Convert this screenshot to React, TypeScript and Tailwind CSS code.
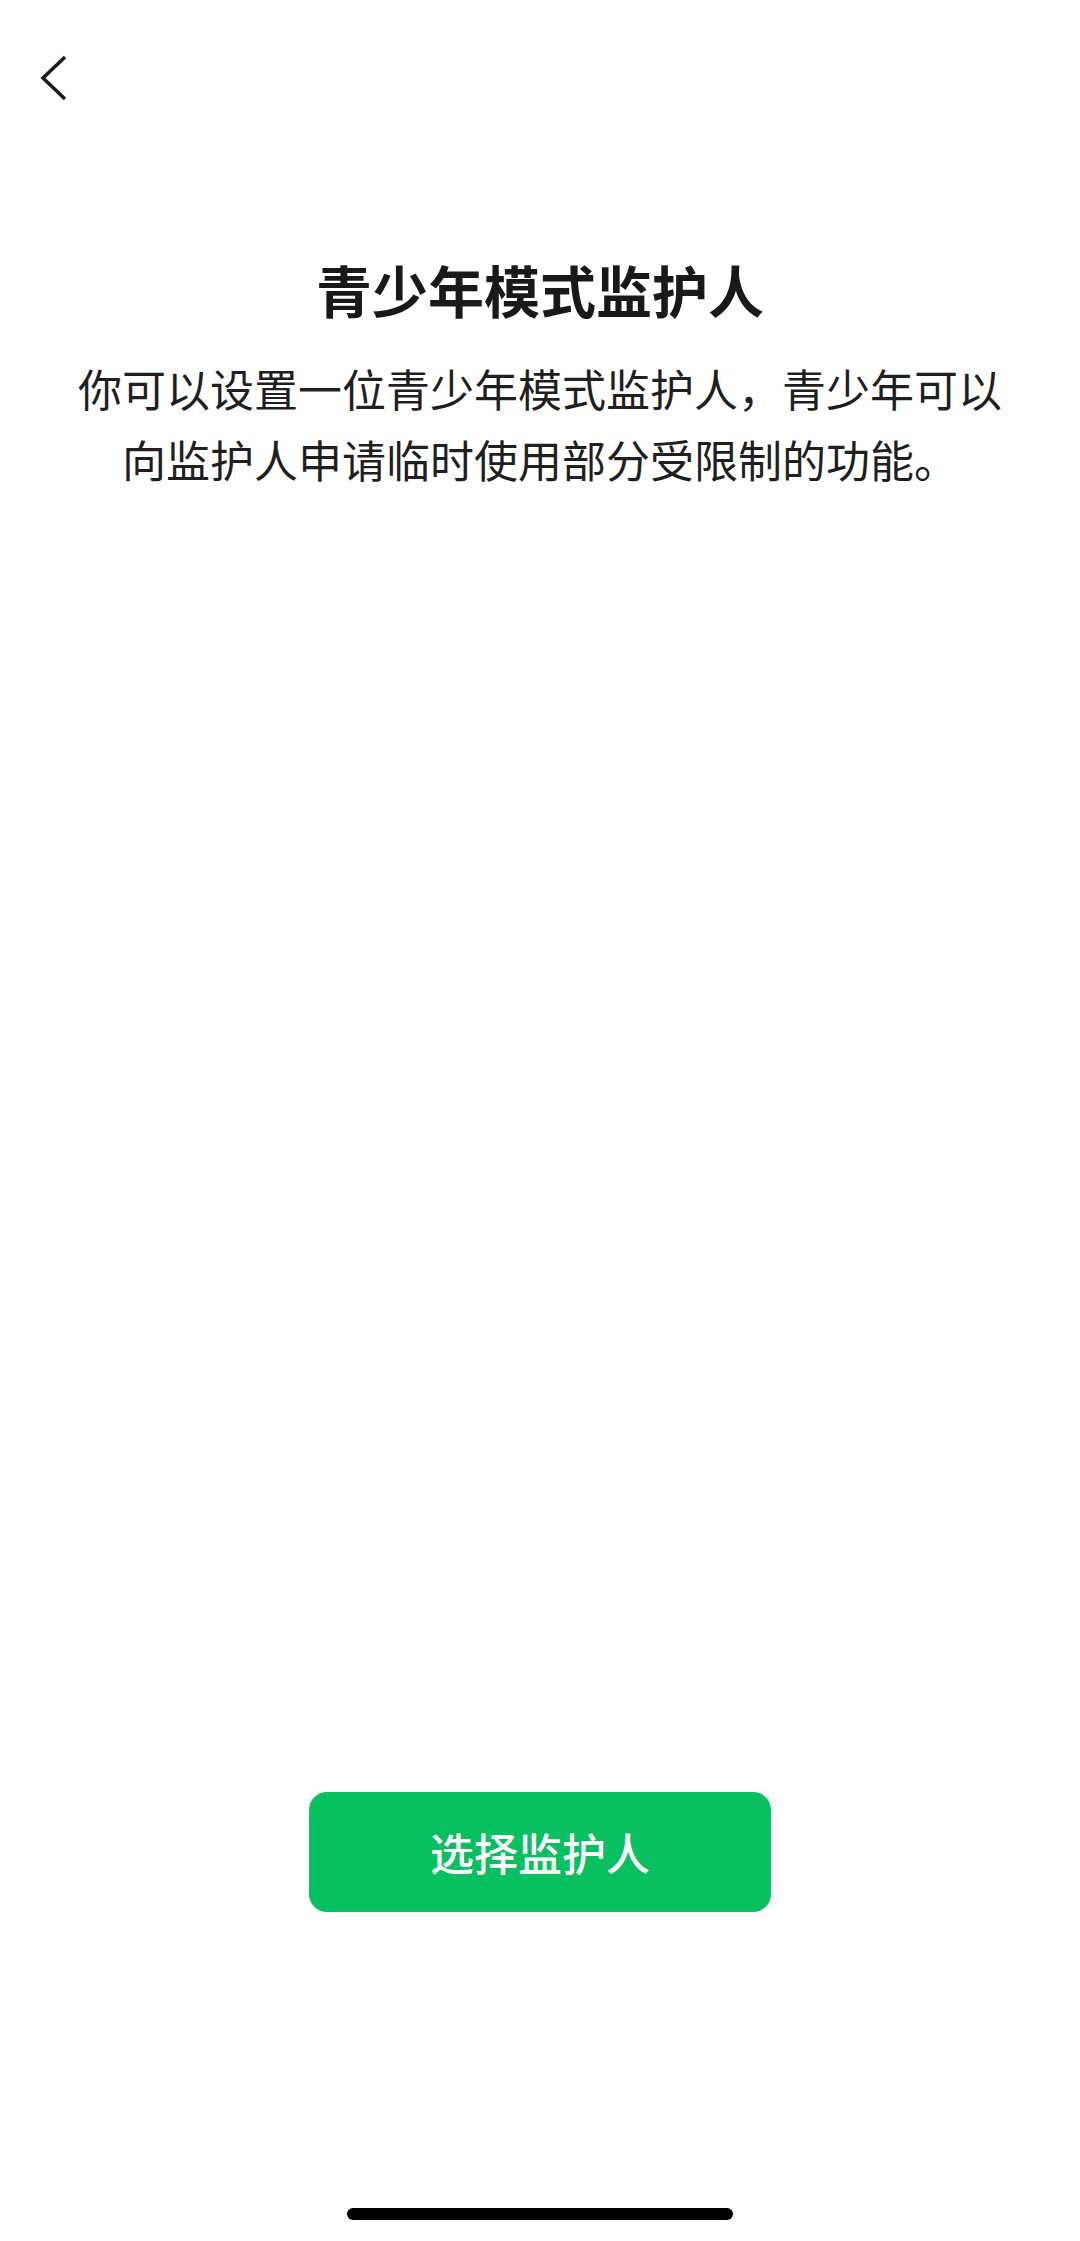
export default function App() {
  return (
    <div
      className="w-[1080px] h-[2241px] bg-white flex flex-col"
      style={{ fontFamily: '"Noto Sans CJK SC", "Noto Sans", sans-serif' }}
    >
      {/* top bar */}
      <div className="pt-[54px] pl-[40px] h-[102px]">
        <svg width="28" height="48" viewBox="0 0 28 48" fill="none">
          <polyline
            points="25,3 3,24 25,45"
            stroke="#1a1a1a"
            strokeWidth="3.5"
            strokeLinejoin="miter"
          />
        </svg>
      </div>

      <h1 className="mt-[147px] text-center text-[56px] leading-[80px] font-semibold text-[#191919]">
        青少年模式监护人
      </h1>
      <p className="mt-[24px] px-[75px] text-center text-[44px] leading-[71px] text-[#1f1f1f]">
        你可以设置一位青少年模式监护人，青少年可以向监护人申请临时使用部分受限制的功能。
      </p>

      <div className="flex-1" />

      <div className="flex justify-center">
        <button className="w-[462px] h-[120px] rounded-[18px] bg-[#07c160] text-white text-[44px] font-medium">
          选择监护人
        </button>
      </div>

      <div className="h-[329px] flex flex-col justify-end items-center pb-[21px]">
        <div className="w-[386px] h-[12px] rounded-full bg-black" />
      </div>
    </div>
  );
}
